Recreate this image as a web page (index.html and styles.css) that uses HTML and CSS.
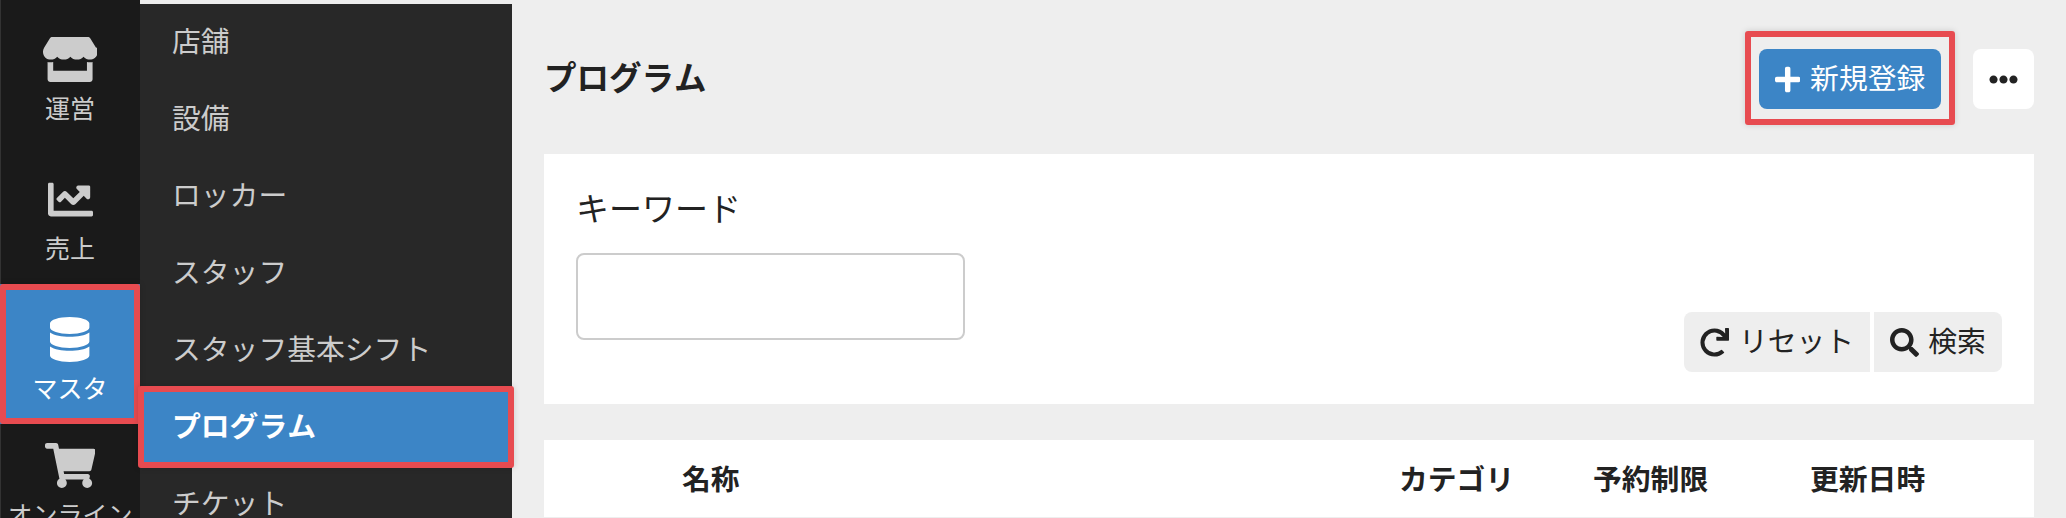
FILE: index.html
```html
<!DOCTYPE html>
<html lang="ja">
<head>
    <meta charset="UTF-8">
    <meta name="viewport" content="width=device-width, initial-scale=1.0">
    <title>プログラム</title>
    <link rel="stylesheet" href="styles.css">
</head>
<body>
    <nav class="rail">
        <a class="rail-item">
            <svg class="rail-icon" viewBox="0 0 616 512"><path d="M602 118.6L537.1 15C531.3 5.7 521 0 510 0H106C95 0 84.7 5.7 78.9 15L14 118.6c-33.9 54.1-3.9 129.3 59.4 137.9 4.6.6 9.2.9 13.7.9 29.9 0 56.4-13.1 74.8-33.4 18.4 20.3 45 33.4 74.8 33.4 29.9 0 56.4-13.1 74.8-33.4 18.4 20.3 45 33.4 74.8 33.4 29.9 0 56.4-13.1 74.8-33.4 18.5 20.3 45 33.4 74.8 33.4 4.6 0 9.1-.3 13.7-.9 63.5-8.5 93.6-83.7 59.6-137.9zM529.5 288c-10 0-19.9-1.5-29.5-3.8V384H116v-99.8c-9.6 2.2-19.5 3.8-29.5 3.8-6 0-12.1-.4-18-1.2-5.6-.8-11.1-2.1-16.4-3.6V480c0 17.7 14.3 32 32 32h448c17.7 0 32-14.3 32-32V283.2c-5.4 1.6-10.8 2.9-16.4 3.6-6.1.8-12.1 1.2-18.2 1.2z"/></svg>
            <span>運営</span>
        </a>
        <a class="rail-item">
            <svg class="rail-icon" viewBox="0 0 512 512"><path d="M496 384H64V80c0-8.84-7.16-16-16-16H16C7.16 64 0 71.16 0 80v336c0 17.67 14.33 32 32 32h464c8.84 0 16-7.16 16-16v-32c0-8.84-7.16-16-16-16zM464 96H345.94c-21.38 0-32.09 25.85-16.97 40.97l32.4 32.4L288 242.75l-73.37-73.37c-12.5-12.5-32.76-12.5-45.25 0l-68.69 68.69c-6.25 6.25-6.25 16.38 0 22.63l22.62 22.62c6.25 6.25 16.38 6.25 22.63 0L192 237.25l73.37 73.37c12.5 12.5 32.76 12.5 45.25 0l96-96 32.4 32.4c15.12 15.12 40.97 4.41 40.97-16.97V112c.01-8.84-7.15-16-15.99-16z"/></svg>
            <span>売上</span>
        </a>
        <a class="rail-item active">
            <svg class="rail-icon" viewBox="0 0 448 512"><path d="M448 73.143v45.714C448 159.143 347.667 192 224 192S0 159.143 0 118.857V73.143C0 32.857 100.333 0 224 0s224 32.857 224 73.143zM448 176v102.857C448 319.143 347.667 352 224 352S0 319.143 0 278.857V176c48.125 33.143 136.208 48.572 224 48.572S399.874 209.143 448 176zm0 160v102.857C448 479.143 347.667 512 224 512S0 479.143 0 438.857V336c48.125 33.143 136.208 48.572 224 48.572S399.874 369.143 448 336z"/></svg>
            <span>マスタ</span>
            <i class="mark"></i>
        </a>
        <a class="rail-item">
            <svg class="rail-icon" viewBox="0 0 576 512"><path d="M528.12 301.319l47.273-208C578.806 78.301 567.391 64 551.99 64H159.208l-9.166-44.81C147.758 8.021 137.93 0 126.529 0H24C10.745 0 0 10.745 0 24v16c0 13.255 10.745 24 24 24h69.883l70.248 343.435C147.325 417.1 136 435.222 136 456c0 30.928 25.072 56 56 56s56-25.072 56-56c0-15.674-6.447-29.835-16.824-40h209.647C430.447 426.165 424 440.326 424 456c0 30.928 25.072 56 56 56s56-25.072 56-56c0-22.172-12.888-41.332-31.579-50.405l5.517-24.276c3.413-15.018-8.002-29.319-23.403-29.319H218.117l-6.545-32h293.145c11.206 0 20.92-7.754 23.403-18.681z"/></svg>
            <span>オンライン予約</span>
        </a>
    </nav>

    <nav class="submenu">
        <a class="submenu-item">店舗</a>
        <a class="submenu-item">設備</a>
        <a class="submenu-item">ロッカー</a>
        <a class="submenu-item">スタッフ</a>
        <a class="submenu-item">スタッフ基本シフト</a>
        <a class="submenu-item active">プログラム<i class="mark"></i></a>
        <a class="submenu-item">チケット</a>
    </nav>

    <main class="content">
        <header class="page-head">
            <h1>プログラム</h1>
            <div class="page-actions">
                <button class="btn btn-primary">
                    <svg class="btn-icon" viewBox="0 0 448 512"><path d="M416 208H272V64c0-17.67-14.33-32-32-32h-32c-17.67 0-32 14.33-32 32v144H32c-17.67 0-32 14.33-32 32v32c0 17.67 14.33 32 32 32h144v144c0 17.67 14.33 32 32 32h32c17.67 0 32-14.33 32-32V304h144c17.67 0 32-14.33 32-32v-32c0-17.67-14.33-32-32-32z"/></svg>
                    <span>新規登録</span>
                    <i class="mark"></i>
                </button>
                <button class="btn btn-more">
                    <svg class="btn-icon" viewBox="0 0 512 512"><path d="M328 256c0 39.8-32.2 72-72 72s-72-32.2-72-72 32.2-72 72-72 72 32.2 72 72zm104-72c-39.8 0-72 32.2-72 72s32.2 72 72 72 72-32.2 72-72-32.2-72-72-72zm-352 0c-39.8 0-72 32.2-72 72s32.2 72 72 72 72-32.2 72-72-32.2-72-72-72z"/></svg>
                </button>
            </div>
        </header>

        <form class="panel search-form" onsubmit="return false;">
            <div class="field">
                <label for="keyword">キーワード</label>
                <input id="keyword" type="text">
            </div>
            <div class="search-actions">
                <button class="btn btn-gray">
                    <svg class="btn-icon" viewBox="0 0 512 512"><path d="M500.33 0h-47.41a12 12 0 0 0-12 12.57l4 82.76A247.42 247.42 0 0 0 256 8C119.34 8 7.9 119.53 8 256.19 8.1 393.07 119.1 504 256 504a247.1 247.1 0 0 0 166.18-63.91 12 12 0 0 0 .48-17.43l-34-34a12 12 0 0 0-16.38-.55A176 176 0 1 1 402.1 157.8l-101.53-4.87a12 12 0 0 0-12.57 12v47.41a12 12 0 0 0 12 12h200.33a12 12 0 0 0 12-12V12a12 12 0 0 0-12-12z"/></svg>
                    <span>リセット</span>
                </button>
                <button class="btn btn-gray">
                    <svg class="btn-icon" viewBox="0 0 512 512"><path d="M505 442.7L405.3 343c-4.5-4.5-10.6-7-17-7H372c27.6-35.3 44-79.7 44-128C416 93.1 322.9 0 208 0S0 93.1 0 208s93.1 208 208 208c48.3 0 92.7-16.4 128-44v16.3c0 6.4 2.5 12.5 7 17l99.7 99.7c9.4 9.4 24.6 9.4 33.9 0l28.3-28.3c9.4-9.4 9.4-24.6.1-34zM208 336c-70.7 0-128-57.2-128-128 0-70.7 57.2-128 128-128 70.7 0 128 57.2 128 128 0 70.7-57.2 128-128 128z"/></svg>
                    <span>検索</span>
                </button>
            </div>
        </form>

        <div class="panel table-head">
            <span>名称</span>
            <span>カテゴリ</span>
            <span>予約制限</span>
            <span>更新日時</span>
        </div>
    </main>
</body>
</html>
```

FILE: styles.css
```css
body {
    margin: 0;
    height: 100vh;
    overflow: hidden;
    display: flex;
    background: #eeeeee;
    color: #222222;
    font-family: "Noto Sans CJK JP", "Noto Sans", sans-serif;
    font-size: 28.8px;
    font-kerning: none;
}
.mark {
    position: absolute;
    border: 6px solid #e74b50;
    border-radius: 3px;
    box-shadow: 0 0 6px rgba(0, 0, 0, 0.15);
    pointer-events: none;
}

/* left icon rail */
.rail {
    flex: 0 0 140px;
    box-sizing: border-box;
    padding-top: 4px;
    background: #1a1a1a;
    color: #cccccc;
    border-left: 1px solid #333333;
}
.rail-item {
    position: relative;
    box-sizing: border-box;
    height: 140px;
    margin-left: -1px;
    padding-top: 12px;
    display: flex;
    flex-direction: column;
    align-items: center;
    justify-content: center;
    gap: 11px;
    font-size: 25px;
    line-height: 28px;
    text-align: center;
}
.rail-item span {
    padding-bottom: 2px;
}
.rail-icon {
    display: block;
    height: 45px;
    fill: currentColor;
    flex: none;
}
.rail-item.active {
    background: #3c85c6;
    color: #ffffff;
}
.rail-item .mark {
    inset: 0;
}

/* second level menu */
.submenu {
    flex: 0 0 372px;
    margin-top: 4px;
    background: #282828;
    color: #cccccc;
}
.submenu-item {
    position: relative;
    box-sizing: border-box;
    display: flex;
    align-items: center;
    height: 77px;
    padding: 0 0 6px 32px;
}
.submenu-item.active {
    background: #3c85c6;
    color: #ffffff;
    font-weight: bold;
}
.submenu-item .mark {
    inset: -3px -2px -2px -2px;
}

/* main area */
.content {
    flex: 1;
    padding: 0 32px;
}
.page-head {
    display: flex;
    justify-content: space-between;
    align-items: center;
    padding-top: 49px;
    margin-bottom: 45px;
}
h1 {
    margin: 0;
    padding-bottom: 7px;
    font-size: 32.5px;
    font-weight: bold;
}
.page-actions {
    display: flex;
    gap: 32px;
}
.btn {
    position: relative;
    display: flex;
    align-items: center;
    justify-content: center;
    gap: 10px;
    height: 60px;
    padding: 0;
    border: none;
    border-radius: 8px;
    font-family: inherit;
    font-size: 28.8px;
    font-kerning: none;
    color: #222222;
}
.btn span {
    padding-bottom: 5px;
}
.btn-icon {
    display: block;
    height: 29px;
    fill: currentColor;
    flex: none;
}
.btn-primary {
    width: 182px;
    background: #3c85c6;
    color: #ffffff;
}
.btn-primary .mark {
    inset: -18px -14px -16px -14px;
}
.btn-more {
    width: 61px;
    background: #ffffff;
}
.panel {
    background: #ffffff;
}
.search-form {
    display: flex;
    justify-content: space-between;
    align-items: flex-end;
    padding: 32px;
    height: 250px;
    box-sizing: border-box;
}
.field {
    padding-bottom: 32px;
}
.field label {
    display: block;
    font-size: 33px;
    line-height: 42px;
    margin-bottom: 25px;
}
.field input {
    display: block;
    box-sizing: border-box;
    width: 389px;
    height: 87px;
    border: 2px solid #cccccc;
    border-radius: 8px;
}
.search-actions {
    display: flex;
    gap: 4px;
}
.btn-gray {
    background: #eeeeee;
    width: 186px;
    border-radius: 8px 0 0 8px;
    gap: 10px;
}
.btn-gray + .btn-gray {
    width: 128px;
    border-radius: 0 8px 8px 0;
    gap: 9px;
}
.table-head {
    display: grid;
    grid-template-columns: 717px 194px 217px 1fr;
    align-items: center;
    box-sizing: border-box;
    height: 78px;
    margin-top: 36px;
    padding-left: 138px;
    border-bottom: 1px solid #eeeeee;
    font-weight: bold;
}
.table-head span {
    padding-bottom: 3px;
}
```
